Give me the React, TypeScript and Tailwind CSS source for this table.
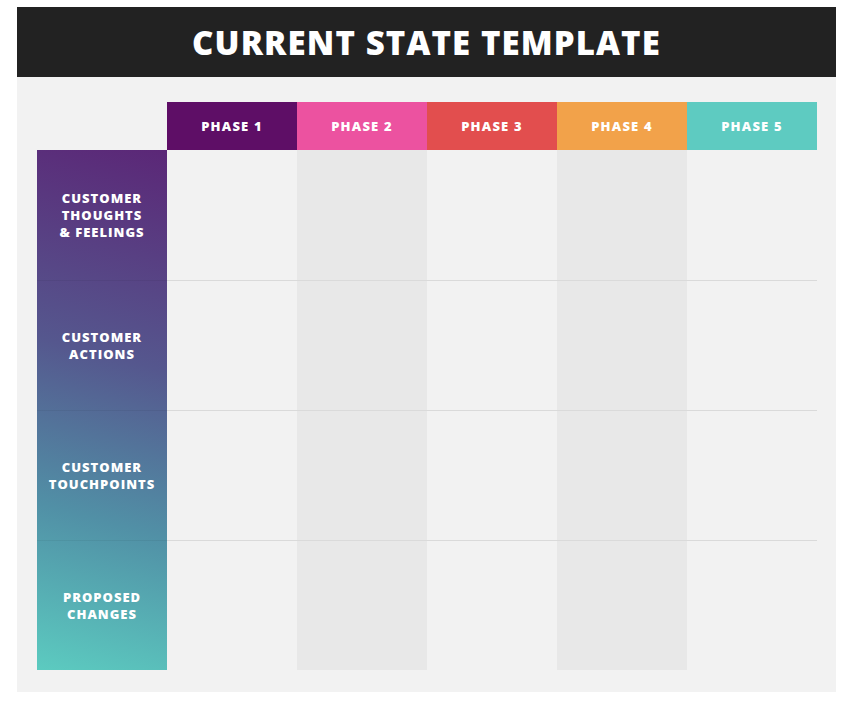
const phases = [
  { name: "PHASE 1", bg: "bg-[#5e0e66]" },
  { name: "PHASE 2", bg: "bg-[#ec52a0]" },
  { name: "PHASE 3", bg: "bg-[#e24e4e]" },
  { name: "PHASE 4", bg: "bg-[#f2a24a]" },
  { name: "PHASE 5", bg: "bg-[#5ecbc1]" },
];

const rows = [
  ["CUSTOMER", "THOUGHTS", "& FEELINGS"],
  ["CUSTOMER", "ACTIONS"],
  ["CUSTOMER", "TOUCHPOINTS"],
  ["PROPOSED", "CHANGES"],
];

export default function App() {
  return (
    <div
      className="w-[852px] h-[704px] bg-white pt-[7px] pl-[17px]"
      style={{ fontFamily: '"Open Sans", "DejaVu Sans", sans-serif' }}>
      <div className="w-[819px]">
        <div className="h-[70px] bg-[#222222] flex items-center justify-center">
          <h1 className="text-white text-[33px] font-extrabold tracking-[1.1px] leading-none">
            CURRENT STATE TEMPLATE
          </h1>
        </div>
        <div className="bg-[#f2f2f2] pt-[25px] pb-[22px] pl-[20px]">
          <div className="flex">
            <div className="w-[130px]" />
            {phases.map((p) => (
              <div
                key={p.name}
                className={`${p.bg} w-[130px] h-[48px] flex items-center justify-center pt-[1px] text-white text-[13px] font-extrabold tracking-[1.2px]`}>
                {p.name}
              </div>
            ))}
          </div>
          <div className="flex">
            <div className="w-[130px] bg-[linear-gradient(195deg,#5b2777_0%,#55578e_40%,#5190a6_70%,#5ccbc0_100%)] flex flex-col">
              {rows.map((lines, i) => (
                <div
                  key={i}
                  className={`h-[130px] flex flex-col items-center justify-center text-white text-[13px] font-extrabold leading-[17px] tracking-[1px] text-center ${
                    i > 0 ? "border-t border-black/5" : ""
                  }`}>
                  {lines.map((l) => (
                    <span key={l}>{l}</span>
                  ))}
                </div>
              ))}
            </div>
            {phases.map((p, c) => (
              <div
                key={p.name}
                className={`w-[130px] flex flex-col ${
                  c === 1 || c === 3 ? "bg-[#e8e8e8]" : ""
                }`}>
                {rows.map((_, i) => (
                  <div
                    key={i}
                    className={`h-[130px] ${i > 0 ? "border-t border-[#dadada]" : ""}`}
                  />
                ))}
              </div>
            ))}
          </div>
        </div>
      </div>
    </div>
  );
}
